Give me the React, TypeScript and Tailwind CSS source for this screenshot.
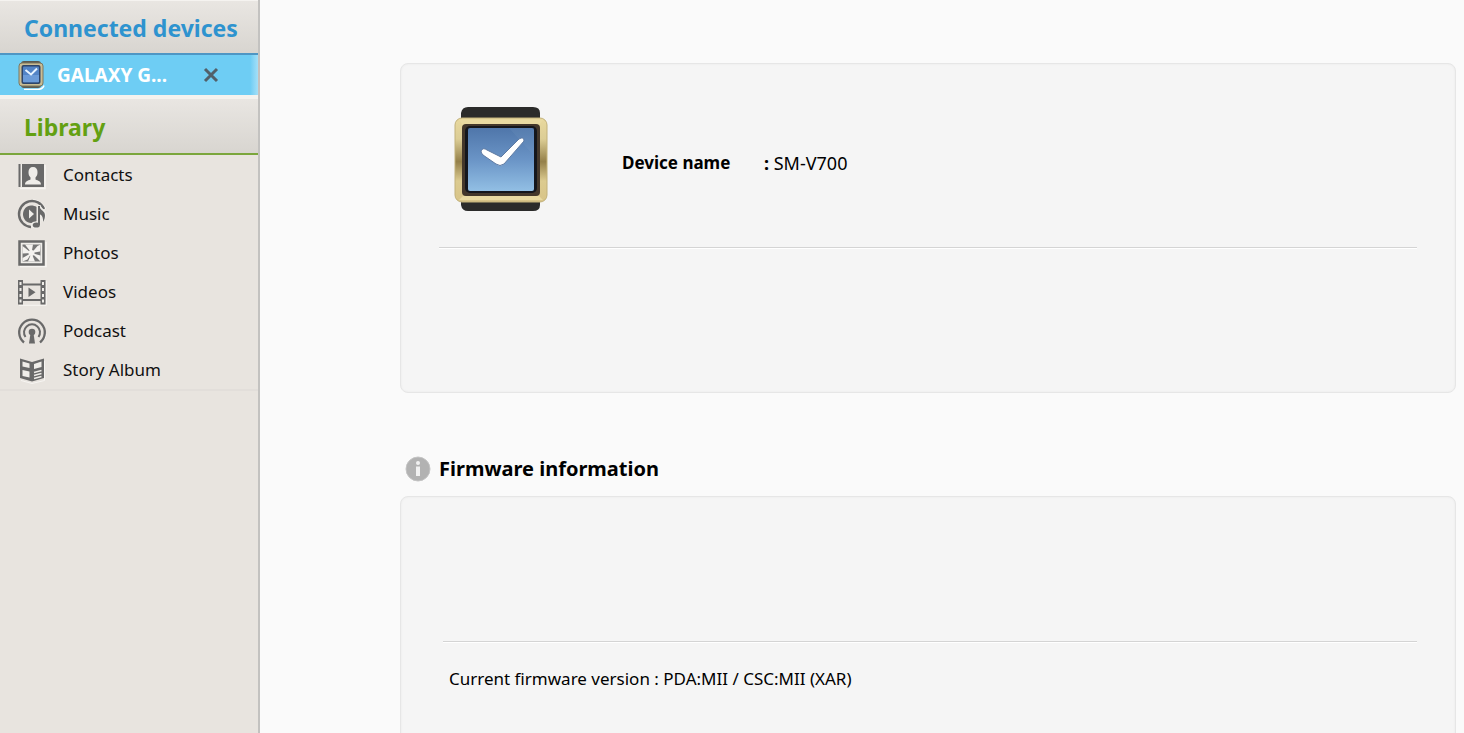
import { useId, useState } from "react";
import type { ReactNode } from "react";

const ContactsIcon = () => (
  <svg viewBox="0 0 30 30" className="h-[30px] w-[30px]" fill="none">
    <path d="M3 28.500h25V5" stroke="#f7f5f2" strokeWidth="1.500" />
    <path d="M2.500 4v23" stroke="#696969" strokeWidth="2" />
    <path d="M4.500 4h22.500v23H4.500z" fill="#696969" />
    <path d="M4.500 4v23" stroke="#efede9" />
    <path
      d="M8 24.500c0-3 3-4 5.500-5v-2c-1.500-1.500-2-3-2-5.500 0-3 1.500-5 4.500-5s4.500 2 4.500 5c0 2.500-.5 4-2 5.500v2c2.500 1 5.500 2 5.500 5z"
      fill="#efede9"
    />
  </svg>
);

const MusicIcon = () => (
  <svg viewBox="0 0 30 30" className="h-[30px] w-[30px]" fill="none">
    <path d="M28.800 10C26 4 21 1 16 .8" stroke="#f7f5f2" />
    <path d="M27 10A13 13 0 1 0 14 28" stroke="#696969" strokeWidth="2.400" />
    <path d="M14 6.500c-4.500 0-8 4-8 8.700s3.500 8.800 8 8.800h3l2.500-2V8c-1.500-1-3-1.500-5.500-1.500z" fill="#696969" />
    <path d="M12 10.500v9l5-4.500z" fill="#efede9" />
    <path d="M20.500 23V6h3c.5 4 5.500 4 5.500 9 0 3-1 6-2.500 8l-2-1c0-2 .5-4-1-5.500V25z" fill="#efede9" />
    <ellipse cx="18.500" cy="26" rx="4.800" ry="3.600" fill="#efede9" />
    <path d="M22 26V7" stroke="#696969" strokeWidth="2" />
    <path d="M22.500 7.500c1 4.500 5.500 4 5.500 9 0 2.500-.7 4.500-2 6.500.3-4-.5-6.500-3.500-8z" fill="#696969" />
    <ellipse cx="19.300" cy="26" rx="3.600" ry="2.600" fill="#696969" />
  </svg>
);

const PhotosIcon = () => (
  <svg viewBox="0 0 30 30" className="h-[30px] w-[30px]" fill="none">
    <path d="M3 28.500h26V4" stroke="#f7f5f2" strokeWidth="1.500" />
    <path d="M2.500 3.500h24v23h-24z" fill="#efede9" stroke="#696969" strokeWidth="2.500" />
    <path d="M5.500 6.500h18v17h-18z" fill="#777" />
    <path
      d="M14.500 15 8 6.500h8zM14.500 15l6-7 3-1.500-.5 7zM14.500 15l-9-7v7.500zM14.500 15l9 2.500v6l-3-3zM14.500 15l-9 5v3.500l5-2zM14.500 15l3.500 8.500h-7z"
      fill="#f4f2ef"
    />
    <circle cx="14.500" cy="15" r="3" fill="#f4f2ef" />
  </svg>
);

const VideosIcon = () => (
  <svg viewBox="0 0 30 30" className="h-[30px] w-[30px]" fill="none">
    <path d="M2 28.300h27.300V4" stroke="#f7f5f2" />
    <path d="M1 3h5v24.500H1zM23.500 3h5v24.500h-5z" fill="#696969" />
    <path d="M6 7.500h18M6 23h18" stroke="#696969" strokeWidth="2.200" />
    <path
      d="M2.500 5h2v3h-2zM2.500 11h2v3h-2zM2.500 17h2v3h-2zM2.500 22.500h2v3h-2zM25 5h2v3h-2zM25 11h2v3h-2zM25 17h2v3h-2zM25 22.500h2v3h-2z"
      fill="#efede9"
    />
    <path d="m11.500 10.500 7 4.700-7 4.800z" fill="#696969" />
  </svg>
);

const PodcastIcon = () => (
  <svg viewBox="0 0 30 30" className="h-[30px] w-[30px]" fill="none">
    <path d="M29.200 18c-.5 4-3 8-6.500 10" stroke="#f7f5f2" />
    <g stroke="#696969">
      <path d="M7 26.500a12.800 12.800 0 1 1 16 0" strokeWidth="2.300" />
      <path d="M8.500 21a8 8 0 1 1 13 0" strokeWidth="2" />
    </g>
    <circle cx="15" cy="16" r="3.300" fill="#696969" />
    <path d="M13.400 18h3.200l1.400 9.500h-6z" fill="#696969" />
  </svg>
);

const StoryAlbumIcon = () => (
  <svg viewBox="0 0 30 30" className="h-[30px] w-[30px]" fill="none">
    <path d="m4 25.500 11 3 12.500-3V6" stroke="#f7f5f2" />
    <path d="M3 3.500 15 7l12-3.500V23l-12 3.500L3 23z" fill="#696969" />
    <path
      d="m5.500 6.500 7 2V13l-7-1.500zM5.500 15l7 1.500v6L5.500 21zM17 9l7.500-2.500V12L17 14z"
      fill="#efede9"
    />
    <path d="m17 17.500 7.500-2M17 20.500l7.500-2M17 23.500l7.500-2" stroke="#efede9" strokeWidth="1.300" />
  </svg>
);

const WatchIcon = ({ className }: { className: string }) => {
  const id = useId();

  return (
    <svg viewBox="0 0 94 104" className={className} fill="none">
      <defs>
        <linearGradient id={`${id}-gold`} x1="0" y1="0" x2="0" y2="1">
          <stop offset="0" stopColor="#e9d99f" />
          <stop offset=".25" stopColor="#dccd95" />
          <stop offset=".52" stopColor="#94804a" />
          <stop offset=".75" stopColor="#dccb90" />
          <stop offset="1" stopColor="#d8c488" />
        </linearGradient>
        <linearGradient id={`${id}-screen`} x1="0" y1="0" x2="0" y2="1">
          <stop offset="0" stopColor="#4f76aa" />
          <stop offset=".5" stopColor="#6a94c6" />
          <stop offset="1" stopColor="#92bfe4" />
        </linearGradient>
      </defs>
      <path d="M7 14V6q1-6 7-6h65q7 0 7 6v8zM7 90v8q1 6 7 6h65q7 0 7-6v-8z" fill="#2b2b2a" />
      <rect x="1" y="11" width="92" height="84" rx="7" fill={`url(#${id}-gold)`} stroke="#c2b17a" />
      <path d="M5 13h84l-4 5H9zM9 89h76l4 4H5z" fill="#e9daa2" />
      <rect x="8" y="17" width="78" height="72" rx="4" fill="#43372b" />
      <rect x="11" y="19" width="72" height="67" rx="5" fill="#14161c" />
      <rect x="14" y="21" width="66" height="63" rx="2" fill={`url(#${id}-screen)`} />
      <path d="M55 21h25v28z" fill="#8fa9cc" opacity=".12" />
      <path
        d="M27 44q2-4 6-1l14 7 18-18q5-3 5 2L50 57q-4 3-8 0L29 48q-2-2-2-4z"
        fill="#fff"
        stroke="#5f7ba3"
        strokeWidth="1"
      />
    </svg>
  );
};

// 사이드바용 작은 시계 아이콘
const SmallWatchIcon = () => (
  <svg viewBox="0 0 27 30" className="h-[30px] w-[27px]" fill="none">
    <path d="M6 29.500h14q5-.5 6-4" stroke="#fff" strokeWidth="1.500" />
    <rect x="3" y="1" width="20" height="27" rx="3" fill="#5b5a50" />
    <rect x="1" y="3" width="24" height="23" rx="3" fill="#c9bd94" stroke="#7d775f" />
    <rect x="3.500" y="5" width="19" height="19" rx="2" fill="#2f4568" />
    <rect x="5" y="6.500" width="16" height="16" rx="1" fill="#5384c6" />
    <path d="M5 15h16v7H5z" fill="#6b9bd8" />
    <path d="m7.500 10 5.500 4.500 6-6" stroke="#e8f4ff" strokeWidth="2" />
  </svg>
);

const InfoIcon = () => (
  <svg viewBox="0 0 26 26" className="h-[26px] w-[26px]">
    <circle cx="13" cy="13" r="12" fill="#b2b2b2" stroke="#c4c4c4" />
    <circle cx="13" cy="7" r="2" fill="#f1f1f1" />
    <path d="M11 10.500h4V20h-4z" fill="#f1f1f1" />
  </svg>
);

const libraryItems: { label: string; icon: ReactNode }[] = [
  { label: "Contacts", icon: <ContactsIcon /> },
  { label: "Music", icon: <MusicIcon /> },
  { label: "Photos", icon: <PhotosIcon /> },
  { label: "Videos", icon: <VideosIcon /> },
  { label: "Podcast", icon: <PodcastIcon /> },
  { label: "Story Album", icon: <StoryAlbumIcon /> },
];

const Sidebar = () => {
  const [connected, setConnected] = useState(true);

  return (
    <aside className="flex w-[260px] shrink-0 flex-col border-r-2 border-[#c3c2c0] bg-[#e8e4df]">
      <h2 className="flex h-[55px] items-center border-t border-b-2 border-t-[#f5f3f0] border-b-[#4e96c4] bg-linear-to-b from-[#e9e6e2] to-[#d8d5d0] pt-0.5 pl-6 text-[23px] leading-7 font-bold whitespace-nowrap text-[#2e93cf]">
        Connected devices
      </h2>

      {connected && (
        <div className="flex h-10 items-center bg-linear-to-r from-[#6ecdf4] from-97% to-[#a4dff7] pl-[18px]">
          <button className="flex items-center gap-3 text-[19px] leading-6 font-bold text-white">
            <SmallWatchIcon />
            <span className="w-[120px] text-left">GALAXY G...</span>
          </button>
          <button
            aria-label="Disconnect"
            className="ml-[26px] text-[#52606a]"
            onClick={() => setConnected(false)}
          >
            <svg viewBox="0 0 16 16" className="h-4 w-4">
              <path d="m2 2 12 12M14 2 2 14" stroke="currentColor" strokeWidth="3" />
            </svg>
          </button>
        </div>
      )}

      <h2 className="flex h-[60px] items-center border-t-4 border-b-2 border-t-[#f4f2ee] border-b-[#7ba63c] bg-linear-to-b from-[#e9e6e2] to-[#d8d5d0] pt-0.5 pl-6 text-[23px] leading-7 font-bold text-[#63a012]">
        Library
      </h2>

      <nav className="border-b-2 border-[#e2deda]">
        <ul>
          {libraryItems.map((item) => (
            <li key={item.label}>
              <a
                href="#"
                className="flex h-[39px] items-center gap-4 pl-[17px] text-[17px] leading-6 text-[#111]"
              >
                {item.icon}
                {item.label}
              </a>
            </li>
          ))}
        </ul>
      </nav>
    </aside>
  );
};

const App = () => {
  return (
    <div className="flex h-screen overflow-hidden bg-[#fafafa] font-['Noto_Sans','Open_Sans',sans-serif] text-black">
      <Sidebar />

      <main className="min-w-0 flex-1 pt-[63px] pr-2 pl-[140px]">
        <section className="h-[330px] rounded-lg border border-[#e6e6e6] bg-[#f5f5f5] px-[38px] inset-shadow-[0_0_2px_#e6e6e6]">
          <div className="flex h-[184px] items-center border-b border-[#d4d4d4] pl-[15px] shadow-[0_1px_0_#fff]">
            <WatchIcon className="mt-1.5 h-[104px] w-[94px]" />
            <dl className="mt-3.5 ml-[74px] flex text-[17px] leading-6">
              <dt className="w-[142px] font-bold">Device name</dt>
              <dd className="text-lg leading-6">
                <b>:</b> SM-V700
              </dd>
            </dl>
          </div>
        </section>

        <h2 className="mt-[62px] flex items-center gap-2 pl-[5px] text-xl leading-7 font-bold">
          <InfoIcon />
          Firmware information
        </h2>

        <section className="mt-[13px] h-[330px] rounded-lg border border-[#e6e6e6] bg-[#f5f5f5] pr-[38px] pl-[42px] inset-shadow-[0_0_2px_#e6e6e6]">
          <div className="h-[145px] border-b border-[#d4d4d4] shadow-[0_1px_0_#fff]" />
          <p className="mt-[25px] pl-[6px] text-[17px] leading-6">
            Current firmware version : PDA:MII / CSC:MII (XAR)
          </p>
        </section>
      </main>
    </div>
  );
};

export default App;
